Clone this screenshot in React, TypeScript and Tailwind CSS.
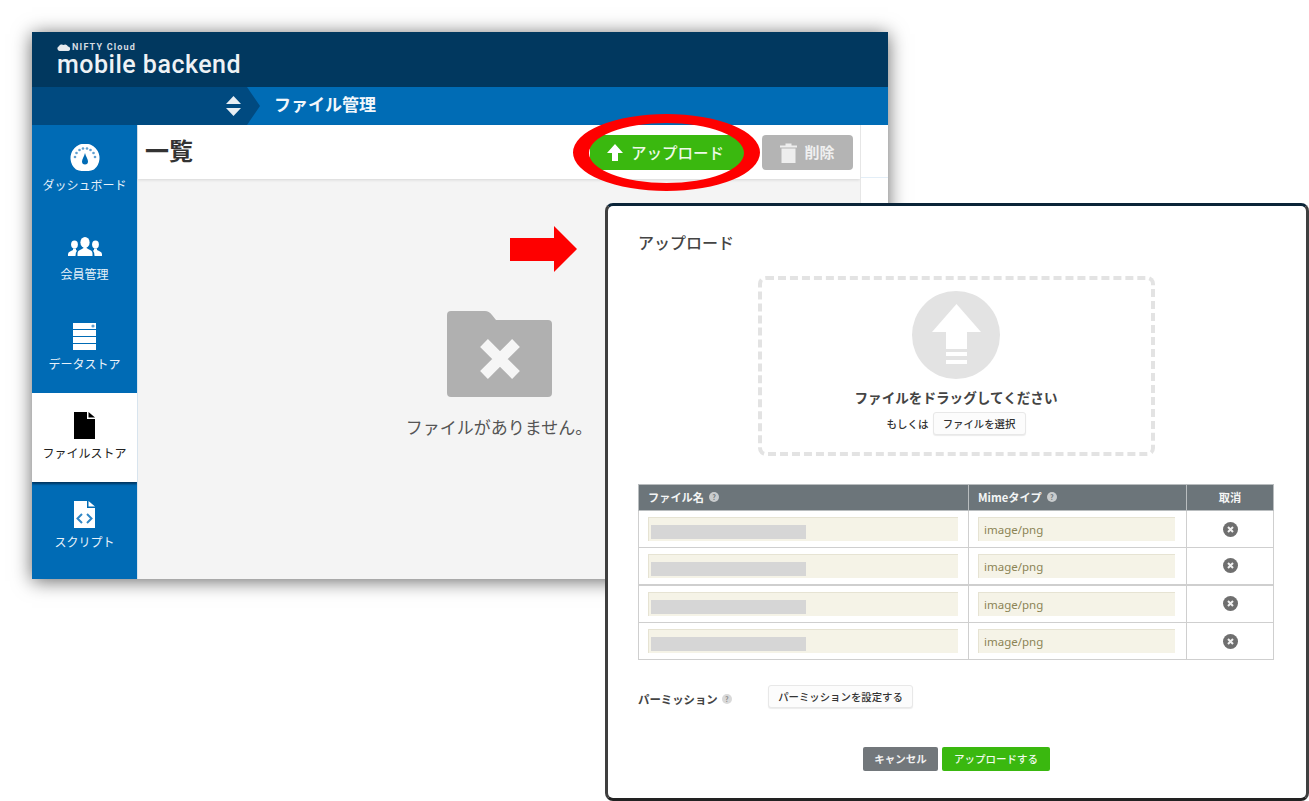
import type { ReactNode } from 'react';

function GaugeIcon() {
  return (
    <svg width="30" height="27" viewBox="0 0 30 27">
      <path d="M6 25.5 A14.5 14.5 0 1 1 24 25.5 Q15 29 6 25.5Z" fill="#fff" />
      <g fill="#5f9fd0">
        <circle cx="5" cy="13" r="1.3" /><circle cx="6.5" cy="9" r="1.3" /><circle cx="9.5" cy="6" r="1.3" />
        <circle cx="13" cy="4.5" r="1.3" /><circle cx="17" cy="4.5" r="1.3" /><circle cx="20.5" cy="6" r="1.3" />
        <circle cx="23.5" cy="9" r="1.3" /><circle cx="25" cy="13" r="1.3" />
      </g>
      <path d="M15 9 C16 13 18 15 18 17.5 A3 3 0 0 1 12 17.5 C12 15 14 13 15 9Z" fill="#006bb5" />
    </svg>
  );
}

function MembersIcon() {
  return (
    <svg width="34" height="19" viewBox="0 0 34 19" fill="#fff">
      <path d="M17 0 A4.6 5.4 0 0 1 17 10.8 A4.6 5.4 0 0 1 17 0Z" />
      <path d="M9.5 19 V16.5 Q9.5 13.5 13 12.5 L15.5 11 V10 H18.5 V11 L21 12.5 Q24.5 13.5 24.5 16.5 V19Z" />
      <path d="M6.5 3.5 A3.4 4 0 0 1 6.5 11.5 A3.4 4 0 0 1 6.5 3.5Z" />
      <path d="M0 19 V17 Q0 15 3 14 L5 13 V11.5 H8 V13 L9 13.7 Q7.5 15 7.5 19Z" />
      <path d="M27.5 3.5 A3.4 4 0 0 1 27.5 11.5 A3.4 4 0 0 1 27.5 3.5Z" />
      <path d="M34 19 V17 Q34 15 31 14 L29 13 V11.5 H26 V13 L25 13.7 Q26.5 15 26.5 19Z" />
    </svg>
  );
}

function DataIcon() {
  return (
    <svg width="23" height="27" viewBox="0 0 23 27" fill="#fff">
      <rect width="23" height="6" />
      <rect y="7" width="23" height="6" />
      <rect y="14" width="23" height="6" />
      <rect y="21" width="23" height="6" />
      <circle cx="20" cy="3" r="1.6" fill="#5f9fd0" />
    </svg>
  );
}

function FileIcon({ color, code }: { color: string; code?: boolean }) {
  return (
    <svg width="21" height="27" viewBox="0 0 21 27">
      <path d="M0 0 H13 V7 H21 V27 H0Z" fill={color} />
      <path d="M14.5 0 L21 5.5 H14.5Z" fill={color} />
      {code && <path d="M8 13 L3.5 17.5 L8 22 M13 13 L17.5 17.5 L13 22" fill="none" stroke="#2f86c6" strokeWidth="2" />}
    </svg>
  );
}

function HelpDot({ light }: { light?: boolean }) {
  return (
    <span
      className={
        light
          ? 'inline-flex h-[10px] w-[10px] items-center justify-center rounded-full bg-[#d9d9d9] text-[7px] leading-none font-bold text-[#8a8a8a]'
          : 'inline-flex h-[10px] w-[10px] items-center justify-center rounded-full bg-[#c9cccd] text-[7px] leading-none font-bold text-[#6c757a]'
      }
    >
      ?
    </span>
  );
}

const navItems: { label: string; icon: ReactNode; active?: boolean }[] = [
  { label: 'ダッシュボード', icon: <GaugeIcon /> },
  { label: '会員管理', icon: <MembersIcon /> },
  { label: 'データストア', icon: <DataIcon /> },
  { label: 'ファイルストア', icon: <FileIcon color="#000" />, active: true },
  { label: 'スクリプト', icon: <FileIcon color="#fff" code /> },
];

function Sidebar() {
  return (
    <nav className="w-[105px] shrink-0 bg-[#006bb5]">
      {navItems.map(item => (
        <div
          key={item.label}
          className={
            item.active
              ? 'flex h-[89.3px] flex-col items-center bg-white text-[#222] shadow-[0_2px_2px_rgba(0,30,60,0.7)]'
              : 'flex h-[89.3px] flex-col items-center text-[#e8f2fa]'
          }
        >
          <div className="mt-[19px] flex h-[27px] items-center justify-center">{item.icon}</div>
          <span className="mt-[2px] text-[12px] leading-[24px] whitespace-nowrap">{item.label}</span>
        </div>
      ))}
    </nav>
  );
}

function BackWindow() {
  return (
    <div className="absolute top-[32px] left-[32px] flex h-[547px] w-[856px] flex-col overflow-hidden bg-white shadow-[0_2px_18px_rgba(0,0,0,0.6)]">
      <header className="h-[55px] bg-[#01385f] pt-[10px] pl-[25px] text-white">
        <div className="flex h-[10px] items-center gap-[1px]">
          <svg width="14" height="7" viewBox="0 0 14 7" fill="#e6eaee">
            <path d="M2.5 7 A2.5 2.5 0 0 1 2 2.2 A3 3 0 0 1 6.5 1 A3 3 0 0 1 11 2.5 A2.3 2.3 0 0 1 11.5 7Z" />
          </svg>
          <span className="font-['Roboto',sans-serif] text-[9px] leading-none font-bold tracking-[1.2px] text-[#d5dce2]">NIFTY Cloud</span>
        </div>
        <div className="mt-[1px] font-['Roboto',sans-serif] text-[25px] leading-[23px] font-medium tracking-[0.5px] whitespace-nowrap text-[#eef2f5]">
          mobile backend
        </div>
      </header>
      <div className="flex h-[38px] items-center bg-[#006cb5]">
        <div className="flex h-full w-[228px] items-center justify-end bg-[#004a80] pr-[19px] [clip-path:polygon(0_0,215px_0,100%_50%,215px_100%,0_100%)]">
          <svg width="15" height="20" viewBox="0 0 15 20" fill="#e8eef3">
            <path d="M7.5 0 L15 8 H0Z M0 12 H15 L7.5 20Z" />
          </svg>
        </div>
        <h1 className="mt-[-4px] ml-[14px] text-[17px] font-bold text-[#f2f7fb]">ファイル管理</h1>
      </div>
      <div className="flex min-h-0 flex-1">
        <Sidebar />
        <main className="flex w-[723px] shrink-0 flex-col border-l border-[#d8e4ee] bg-[#f4f4f4]">
          <div className="flex h-[54px] items-center bg-white pr-[7px] pl-[7px] shadow-[0_1px_3px_rgba(0,0,0,0.12)]">
            <h2 className="mt-[-5px] text-[24px] leading-none font-bold text-[#333]">一覧</h2>
            <button className="mt-[1px] ml-auto flex h-[35px] w-[155px] items-center justify-center gap-[8px] rounded-[3px] bg-[#3ab80f] pr-[4px] text-[15.5px] font-medium text-[#eefae8]">
              <svg width="16" height="17" viewBox="0 0 16 17" fill="#fff">
                <path d="M8 0 L16 9 H11 V17 H5 V9 H0Z" />
              </svg>
              アップロード
            </button>
            <button className="mt-[1px] ml-[17px] flex h-[35px] w-[91px] items-center justify-center gap-[7px] rounded-[4px] bg-[#b4b4b4] text-[15px] font-bold text-[#f0f0f0]">
              <svg width="17" height="20" viewBox="0 0 17 20" fill="#eee">
                <path d="M0 2.5 H5.5 V0.5 H11.5 V2.5 H17 V4.5 H0Z M1.5 5.5 H15.5 V20 H1.5Z" />
              </svg>
              削除
            </button>
          </div>
          <div className="flex flex-1 flex-col items-center pt-[132px]">
            <svg width="105" height="86" viewBox="0 0 105 86">
              <path d="M4 0 H38 Q42 0 45 4 L49 9 H101 Q105 9 105 13 V82 Q105 86 101 86 H4 Q0 86 0 82 V4 Q0 0 4 0Z" fill="#b0b0b0" />
              <path d="M37 32 L69 64 M69 32 L37 64" stroke="#f6f6f6" strokeWidth="11" />
            </svg>
            <p className="mt-[17px] text-[17px] leading-[26px] whitespace-nowrap text-[#555]">ファイルがありません。</p>
          </div>
        </main>
        <div className="flex-1 border-l border-[#e6e6e6] bg-white">
          <div className="h-[53px] border-b border-[#e3eef7]" />
        </div>
      </div>
    </div>
  );
}

function CancelIcon() {
  return (
    <svg width="15" height="15" viewBox="0 0 15 15" className="mx-auto">
      <circle cx="7.5" cy="7.5" r="7.5" fill="#6f6f6f" />
      <path d="M5 5 L10 10 M10 5 L5 10" stroke="#f2f2f2" strokeWidth="2" />
    </svg>
  );
}

function UploadTable() {
  const rows = ['h-[37px]', 'h-[37px]', 'h-[38px]', 'h-[37px]'];
  return (
    <table className="mt-[28px] w-[636px] table-fixed border-collapse">
      <thead>
        <tr className="h-[26px] bg-[#6c757a] text-left text-[11.2px] font-bold text-[#f4f5f5]">
          <th className="w-[330px] border border-[#b9bdbf] pl-[9px] font-bold">
            <span className="flex items-center gap-[5px]">ファイル名 <HelpDot /></span>
          </th>
          <th className="w-[218px] border border-[#b9bdbf] pl-[9px] font-bold">
            <span className="flex items-center gap-[5px]">Mimeタイプ <HelpDot /></span>
          </th>
          <th className="border border-[#b9bdbf] text-center font-bold">取消</th>
        </tr>
      </thead>
      <tbody>
        {rows.map((height, i) => (
          <tr key={i} className={height}>
            <td className={i === 2 ? 'border border-t-2 border-[#cfcfcf] px-[9px]' : 'border border-[#cfcfcf] px-[9px]'}>
              <div className="flex h-[24px] w-[310px] items-end border-t border-l border-[#e6e3d3] bg-[#f5f3e7] pb-[2px] pl-[2px]">
                <div className="h-[14px] w-[155px] bg-[#d6d6d6]" />
              </div>
            </td>
            <td className={i === 2 ? 'border border-t-2 border-[#cfcfcf] px-[9px]' : 'border border-[#cfcfcf] px-[9px]'}>
              <div className="flex h-[24px] w-[197px] items-center border-t border-l border-[#e6e3d3] bg-[#f5f3e7] pl-[5px] font-['Noto_Sans',sans-serif] text-[11.5px] text-[#8c8455]">
                image/png
              </div>
            </td>
            <td className={i === 2 ? 'border border-t-2 border-[#cfcfcf]' : 'border border-[#cfcfcf]'}>
              <CancelIcon />
            </td>
          </tr>
        ))}
      </tbody>
    </table>
  );
}

function UploadModal() {
  return (
    <section className="absolute top-[203px] left-[605px] h-[598px] w-[704px] rounded-[8px] border-[3px] border-[#3f3f3f] border-t-[#0a2438] border-b-[#222] bg-white pr-[32px] pl-[30px]">
      <h3 className="pt-[26px] text-[16px] leading-[20px] font-medium text-[#444]">アップロード</h3>
      <div className="mx-auto mt-[24px] flex h-[180px] w-[397px] flex-col items-center rounded-[8px] border-[4px] border-dashed border-[#e3e3e3] pt-[11px]">
        <svg width="88" height="88" viewBox="0 0 88 88">
          <circle cx="44" cy="44" r="44" fill="#e3e3e3" />
          <path d="M44.5 13 L69 41 H55 V58 H34 V41 H20Z M34 61 H55 V65 H34Z M34 69 H55 V73 H34Z" fill="#fff" />
        </svg>
        <p className="mt-[8px] text-[13.6px] leading-[20px] font-bold text-[#444]">ファイルをドラッグしてください</p>
        <div className="mt-[5px] flex items-center gap-[4px] text-[10.5px] font-medium text-[#333]">
          もしくは
          <button className="h-[23px] w-[93px] rounded-[3px] border border-[#e8e8e8] bg-[#fcfcfc] text-[10.4px] font-medium text-[#333] shadow-[0_1px_1px_rgba(0,0,0,0.08)]">
            ファイルを選択
          </button>
        </div>
      </div>
      <UploadTable />
      <div className="mt-[25px] flex h-[23px]">
        <div className="mt-[5px] flex w-[130px] items-center gap-[4px] text-[11.4px] leading-[18px] font-bold text-[#444]">
          パーミッション <HelpDot light />
        </div>
        <button className="h-[23px] w-[145px] rounded-[3px] border border-[#e8e8e8] bg-[#fcfcfc] text-[10.4px] font-medium text-[#333] shadow-[0_1px_1px_rgba(0,0,0,0.08)]">
          パーミッションを設定する
        </button>
      </div>
      <div className="mt-[39px] flex justify-center gap-[4px] pl-[1px]">
        <button className="h-[24px] w-[75px] rounded-[2px] bg-[#72777b] text-[10.5px] font-bold text-[#f2f2f2]">キャンセル</button>
        <button className="h-[24px] w-[108px] rounded-[2px] bg-[#3ab80f] text-[10.5px] font-medium text-[#f2fbee]">アップロードする</button>
      </div>
    </section>
  );
}

export default function App() {
  return (
    <div className="relative h-[801px] w-[1309px] overflow-hidden bg-white font-['Noto_Sans_CJK_JP','Noto_Sans',sans-serif]">
      <BackWindow />
      {/* red annotations drawn on top of the screenshot */}
      <svg className="absolute top-[114px] left-[573px]" width="187" height="77" viewBox="0 0 187 77">
        <path
          fillRule="evenodd"
          fill="#fe0000"
          d="M0 38.5 A93.5 38.5 0 1 1 187 38.5 A93.5 38.5 0 1 1 0 38.5Z M16 39 A77.5 30 0 1 0 171 39 A77.5 30 0 1 0 16 39Z"
        />
      </svg>
      <svg className="absolute top-[226px] left-[510px]" width="67" height="46" viewBox="0 0 67 46">
        <path d="M0 12 H44 V0 L67 23 L44 46 V35 H0Z" fill="#fe0000" />
      </svg>
      <UploadModal />
    </div>
  );
}
